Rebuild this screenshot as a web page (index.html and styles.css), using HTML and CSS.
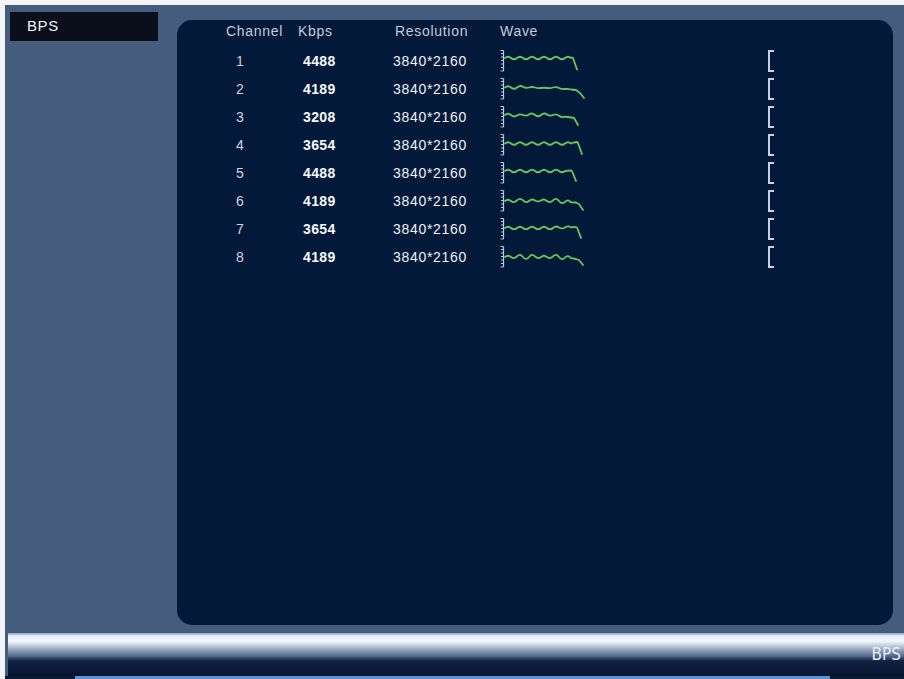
FILE: index.html
```html
<!DOCTYPE html>
<html>
<head>
<meta charset="utf-8">
<title>BPS</title>
<link rel="stylesheet" href="styles.css">
</head>
<body>
<div class="screen">
  <div class="main">
    <div class="side">
      <div class="tab">BPS</div>
    </div>
    <div class="panel">
      <div class="grid head">
        <div class="c-ch">Channel</div>
        <div class="c-kb">Kbps</div>
        <div class="c-res">Resolution</div>
        <div class="c-wave">Wave</div>
        <div></div>
      </div>
      <div class="rows">
        <div class="grid row">
          <div class="c-ch num">1</div><div class="c-kb val">4488</div><div class="c-res val">3840*2160</div>
          <div class="c-wave"><svg class="wave" viewBox="0 0 90 22" width="90" height="22"><path class="scale" d="M3.5 0.5V21M0.5 0.5H3.5M0.5 21H3.5M1 3.5H3.5M1 7H3.5M1 10.5H3.5M1 14H3.5M1 17.5H3.5"/><path class="line" d="M5 8q3-2.6 6 0t6 0t6 0t6 0t6 0t6 0t6 0t6 0t6 0t6 0t6 0L72 7.5L73 8L77 19.5"/></svg></div>
          <div><span class="brk"></span></div>
        </div>
        <div class="grid row">
          <div class="c-ch num">2</div><div class="c-kb val">4189</div><div class="c-res val">3840*2160</div>
          <div class="c-wave"><svg class="wave" viewBox="0 0 90 22" width="90" height="22"><path class="scale" d="M3.5 0.5V21M0.5 0.5H3.5M0.5 21H3.5M1 3.5H3.5M1 7H3.5M1 10.5H3.5M1 14H3.5M1 17.5H3.5"/><path class="line" d="M5 9.5q3-2.6 6 0t6 0t6 -0.8t6 0.8t6 0t6 0.5t6 0t6 -0.5t6 0.5t6 1t6 0.5L76 12L80 15L84 20"/></svg></div>
          <div><span class="brk"></span></div>
        </div>
        <div class="grid row">
          <div class="c-ch num">3</div><div class="c-kb val">3208</div><div class="c-res val">3840*2160</div>
          <div class="c-wave"><svg class="wave" viewBox="0 0 90 22" width="90" height="22"><path class="scale" d="M3.5 0.5V21M0.5 0.5H3.5M0.5 21H3.5M1 3.5H3.5M1 7H3.5M1 10.5H3.5M1 14H3.5M1 17.5H3.5"/><path class="line" d="M5 9q3-2.6 6 0t6 0.6t6 -0.6t6 -0.6t6 0.6t6 0t6 -0.6t6 0.6t6 0.8t6 0.8L68 11L74 12L78 19"/></svg></div>
          <div><span class="brk"></span></div>
        </div>
        <div class="grid row">
          <div class="c-ch num">4</div><div class="c-kb val">3654</div><div class="c-res val">3840*2160</div>
          <div class="c-wave"><svg class="wave" viewBox="0 0 90 22" width="90" height="22"><path class="scale" d="M3.5 0.5V21M0.5 0.5H3.5M0.5 21H3.5M1 3.5H3.5M1 7H3.5M1 10.5H3.5M1 14H3.5M1 17.5H3.5"/><path class="line" d="M5 9.5q3-2.6 6 0t6 0t6 0t6 0t6 0t6 0t6 0t6 0t6 0t6 0t6 0L74 8.5L77 8L78 9L82 20"/></svg></div>
          <div><span class="brk"></span></div>
        </div>
        <div class="grid row">
          <div class="c-ch num">5</div><div class="c-kb val">4488</div><div class="c-res val">3840*2160</div>
          <div class="c-wave"><svg class="wave" viewBox="0 0 90 22" width="90" height="22"><path class="scale" d="M3.5 0.5V21M0.5 0.5H3.5M0.5 21H3.5M1 3.5H3.5M1 7H3.5M1 10.5H3.5M1 14H3.5M1 17.5H3.5"/><path class="line" d="M5 9q3-2.6 6 0t6 0t6 0t6 0t6 0t6 0t6 0t6 0t6 0t6 0L71 8.5L72 9L76 19"/></svg></div>
          <div><span class="brk"></span></div>
        </div>
        <div class="grid row">
          <div class="c-ch num">6</div><div class="c-kb val">4189</div><div class="c-res val">3840*2160</div>
          <div class="c-wave"><svg class="wave" viewBox="0 0 90 22" width="90" height="22"><path class="scale" d="M3.5 0.5V21M0.5 0.5H3.5M0.5 21H3.5M1 3.5H3.5M1 7H3.5M1 10.5H3.5M1 14H3.5M1 17.5H3.5"/><path class="line" d="M5 11q3-2.6 6 0t6 -0.6t6 0t6 0.6t6 -0.6t6 0t6 0.6t6 -0.6t6 0.6t6 0.8t6 0.6L76 12.5L79 14L83 20"/></svg></div>
          <div><span class="brk"></span></div>
        </div>
        <div class="grid row">
          <div class="c-ch num">7</div><div class="c-kb val">3654</div><div class="c-res val">3840*2160</div>
          <div class="c-wave"><svg class="wave" viewBox="0 0 90 22" width="90" height="22"><path class="scale" d="M3.5 0.5V21M0.5 0.5H3.5M0.5 21H3.5M1 3.5H3.5M1 7H3.5M1 10.5H3.5M1 14H3.5M1 17.5H3.5"/><path class="line" d="M5 10q3-2.6 6 0t6 0t6 0t6 0t6 0t6 0t6 0t6 0t6 -0.6t6 0t6 0L75 9L77 9.5L81 20"/></svg></div>
          <div><span class="brk"></span></div>
        </div>
        <div class="grid row">
          <div class="c-ch num">8</div><div class="c-kb val">4189</div><div class="c-res val">3840*2160</div>
          <div class="c-wave"><svg class="wave" viewBox="0 0 90 22" width="90" height="22"><path class="scale" d="M3.5 0.5V21M0.5 0.5H3.5M0.5 21H3.5M1 3.5H3.5M1 7H3.5M1 10.5H3.5M1 14H3.5M1 17.5H3.5"/><path class="line" d="M5 11q3-2.6 6 0t6 -0.6t6 0.6t6 0t6 -0.6t6 0.6t6 0t6 -0.6t6 0.6t6 0.6t6 0.6L76 13L79 14L83 19"/></svg></div>
          <div><span class="brk"></span></div>
        </div>
      </div>
    </div>
  </div>
  <div class="bar">
    <span class="bar-label">BPS</span>
  </div>
  <div class="baseline"><span class="baseline-fill"></span></div>
</div>
</body>
</html>
```

FILE: styles.css
```css
html, body {
  margin: 0;
  padding: 0;
  background: #f3f5f9;
}

body {
  font-family: "Liberation Sans", Arial, sans-serif;
  overflow: hidden;
}

.screen {
  margin: 5px 0 0 5px;
  width: 899px;
  height: 674px;
  background: #465c7e;
  display: flex;
  flex-direction: column;
}

.main {
  height: 628px;
  display: flex;
}

.side {
  width: 167px;
  padding: 7px 0 0 5px;
}

.tab {
  width: 148px;
  height: 29px;
  box-sizing: border-box;
  background: #0a0f1b;
  color: #f4f6fa;
  font-size: 15px;
  letter-spacing: 0.6px;
  padding: 5px 0 0 17px;
}

.panel {
  margin-top: 15px;
  width: 716px;
  height: 605px;
  border-radius: 15px;
  background: #02193a;
  box-sizing: border-box;
  padding-left: 49px;
}

.grid {
  display: grid;
  grid-template-columns: 72px 95px 107px 270px 20px;
  align-items: center;
  font-size: 14px;
  letter-spacing: 0.7px;
}

.head {
  height: 22px;
  margin-bottom: 5px;
  color: #c3cedc;
}

.head .c-res {
  padding-left: 2px;
}

.row {
  height: 28px;
}

.num {
  color: #cbd5e2;
  padding-left: 10px;
}

.val {
  color: #eef2f7;
}

.c-kb.val {
  padding-left: 5px;
  font-weight: bold;
  letter-spacing: 0.4px;
  color: #f6f8fb;
}

.wave {
  display: block;
}

.scale {
  fill: none;
  stroke: #b9c8dc;
  stroke-width: 1.2;
}

.line {
  fill: none;
  stroke: #68c65c;
  stroke-width: 1.8;
  stroke-linejoin: round;
  stroke-linecap: round;
}

.brk {
  display: block;
  width: 4px;
  height: 18px;
  border: 2px solid #c6d2e2;
  border-right: none;
  margin-left: -2px;
}

.bar {
  height: 43px;
  margin-left: 3px;
  background: linear-gradient(to bottom,
    #8ea2c0 0px,
    #e9eff8 3px,
    #f3f7fd 8px,
    #c9d3e2 12px,
    #8899b4 18px,
    #56698a 23px,
    #0f2040 28px,
    #061632 43px);
  display: flex;
  justify-content: flex-end;
}

.bar-label {
  font-family: "Liberation Sans Narrow", "DejaVu Sans Condensed", "Liberation Sans", sans-serif;
  font-stretch: condensed;
  font-size: 17px;
  color: #e6ecf4;
  padding-top: 11px;
  padding-right: 3px;
}

.baseline {
  height: 3px;
  background: #0a1a33;
  display: flex;
}

.baseline-fill {
  margin-left: 70px;
  width: 755px;
  background: #5d93d6;
}
```
